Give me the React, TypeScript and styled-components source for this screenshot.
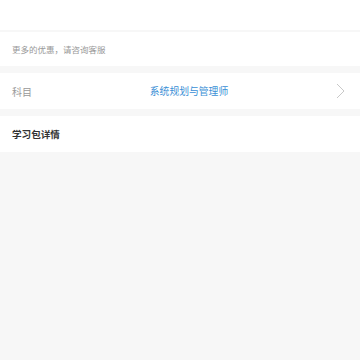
import React from "react";
import styled, { createGlobalStyle } from "styled-components";

const Global = createGlobalStyle`
  html, body { margin: 0; padding: 0; background: #f7f7f7; }
  body { font-family: "Noto Sans CJK SC", "Noto Sans", sans-serif; }
`;

const Page = styled.div`
  width: 360px;
  min-height: 360px;
  background: #f7f7f7;
  display: flex;
  flex-direction: column;
`;

const TopBlank = styled.div`
  height: 30px;
  background: #fff;
`;

const Section = styled.div<{ $gap: number; $h: number }>`
  margin-top: ${(p) => p.$gap}px;
  height: ${(p) => p.$h}px;
  background: #fff;
  display: flex;
  align-items: center;
  padding: 0 12px;
`;

const Hint = styled.span`
  font-size: 8.5px;
  color: #999;
`;

const Label = styled.span`
  width: 36px;
  font-size: 10px;
  color: #999;
`;

const Value = styled.span`
  flex: 1;
  text-align: center;
  font-size: 9.8px;
  color: #3a8fd6;
`;

const Chevron = styled.svg`
  width: 18px;
  height: 16px;
  flex-shrink: 0;
`;

const Title = styled.span`
  font-size: 9.6px;
  font-weight: 700;
  color: #333;
`;

export default function App() {
  return (
    <>
      <Global />
      <Page>
        <TopBlank />
        <Section $gap={2} $h={34}>
          <Hint>更多的优惠，请咨询客服</Hint>
        </Section>
        <Section $gap={7} $h={36}>
          <Label>科目</Label>
          <Value>系统规划与管理师</Value>
          <Chevron viewBox="0 0 18 16">
            <path d="M7 1 L14 8 L7 15" fill="none" stroke="#c8c8c8" strokeWidth="1" />
          </Chevron>
        </Section>
        <Section $gap={7} $h={36}>
          <Title>学习包详情</Title>
        </Section>
      </Page>
    </>
  );
}
